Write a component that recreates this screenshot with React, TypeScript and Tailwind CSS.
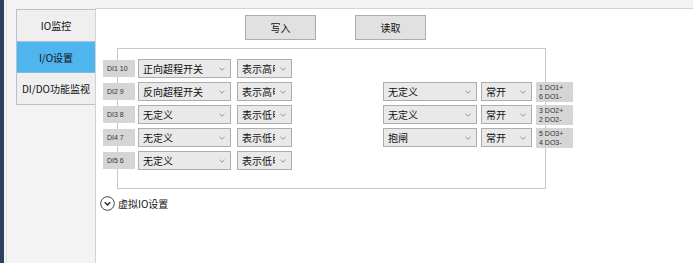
import React from "react";

const font = { fontFamily: '"Noto Sans CJK SC", "Noto Sans", sans-serif' };

function Chevron() {
  return (
    <svg width="6" height="4" viewBox="0 0 6 4" className="shrink-0">
      <path d="M0.5 0.8 L3 3.2 L5.5 0.8" fill="none" stroke="#8a8a8a" strokeWidth="0.9" />
    </svg>
  );
}

function Select({ w, text }: { w: string; text: string }) {
  return (
    <div
      className={`${w} h-[19px] shrink-0 flex items-center border border-[#adadad] bg-[#e9e9e9] pl-[4px] pr-[5px] overflow-hidden`}
    >
      <div className="flex-1 min-w-0 overflow-hidden mr-[5px]">
        <span className="block text-[10px] leading-[17px] text-[#111] whitespace-nowrap">{text}</span>
      </div>
      <Chevron />
    </div>
  );
}

function DiLabel({ t }: { t: string }) {
  return (
    <div className="w-[32px] h-[17px] shrink-0 bg-[#d5d5d5] flex items-center pl-[4px] text-[7px] leading-none text-[#333]" style={{ fontFamily: '"Liberation Sans", sans-serif' }}>
      {t}
    </div>
  );
}

function DoLabel({ a, b }: { a: string; b: string }) {
  return (
    <div className="w-[37px] h-[20px] shrink-0 bg-[#d5d5d5] flex flex-col justify-center pl-[3px] text-[7px] leading-[9px] text-[#333]" style={{ fontFamily: '"Liberation Sans", sans-serif' }}>
      <span>{a}</span>
      <span>{b}</span>
    </div>
  );
}

const rows = [
  { di: "DI1 10", s1: "正向超程开关", s2: "表示高电平" },
  { di: "DI2 9", s1: "反向超程开关", s2: "表示高电平", r: { s: "无定义", a: "1 DO1+", b: "6 DO1-" } },
  { di: "DI3 8", s1: "无定义", s2: "表示低电平", r: { s: "无定义", a: "3 DO2+", b: "2 DO2-" } },
  { di: "DI4 7", s1: "无定义", s2: "表示低电平", r: { s: "抱闸", a: "5 DO3+", b: "4 DO3-" } },
  { di: "DI5 6", s1: "无定义", s2: "表示低电平" },
];

export default function App() {
  return (
    <div className="w-[693px] h-[263px] flex bg-[#f3f3f3] overflow-hidden" style={font}>
      <div className="w-[4px] h-full bg-[#2e3f5f] shrink-0" />
      <div className="w-[91px] shrink-0 h-full flex">
        <div className="w-[2px] h-full" />
        <div className="w-[1px] h-full bg-[#e2e2e2]" />
        <div className="pl-[9px] pt-[9px]">
          <div className="w-[79px] flex flex-col border-l border-t border-[#b4c2d0]">
            <div className="h-[32px] flex items-center justify-center bg-[#efefef] border-b border-[#b4c2d0] text-[10px] text-[#111]">
              IO监控
            </div>
            <div className="h-[31px] flex items-center justify-center bg-[#4fb5ef] border-b border-[#8fb4d0] text-[10px] text-[#111]">
              I/O设置
            </div>
            <div className="h-[32px] flex items-center justify-center bg-[#efefef] border-b border-[#b4c2d0] text-[10px] text-[#111] whitespace-nowrap">
              DI/DO功能监视
            </div>
          </div>
        </div>
      </div>
      <div className="flex-1 mt-[8px] bg-white border-l border-t border-[#d2d2d2] flex flex-col">
        <div className="flex pl-[149px] pt-[6px] gap-[39px]">
          <div className="w-[71px] h-[25px] bg-[#e1e1e1] border border-[#adadad] flex items-center justify-center text-[10px] text-[#111]">
            写入
          </div>
          <div className="w-[71px] h-[25px] bg-[#e1e1e1] border border-[#adadad] flex items-center justify-center text-[10px] text-[#111]">
            读取
          </div>
        </div>
        <div className="ml-[21px] mt-[8px] w-[429px] h-[141px] border border-[#c8c8c8]">
          <div className="-ml-[15px] pt-[10px] flex flex-col gap-[4px]">
            {rows.map((r) => (
              <div key={r.di} className="flex items-center h-[19px]">
                <DiLabel t={r.di} />
                <div className="w-[3px] shrink-0" />
                <Select w="w-[93px]" text={r.s1} />
                <div className="w-[6px] shrink-0" />
                <Select w="w-[55px]" text={r.s2} />
                {r.r && (
                  <>
                    <div className="w-[91px] shrink-0" />
                    <Select w="w-[94px]" text={r.r.s} />
                    <div className="w-[4px] shrink-0" />
                    <Select w="w-[51px]" text="常开" />
                    <div className="w-[4px] shrink-0" />
                    <DoLabel a={r.r.a} b={r.r.b} />
                  </>
                )}
              </div>
            ))}
          </div>
        </div>
        <div className="flex items-center pl-[4px] mt-[7px] gap-[3px]">
          <svg width="15" height="15" viewBox="0 0 15 15">
            <circle cx="7.5" cy="7.5" r="6.8" fill="none" stroke="#444" strokeWidth="1" />
            <path d="M4.8 6.3 L7.5 9 L10.2 6.3" fill="none" stroke="#222" strokeWidth="1.4" />
          </svg>
          <span className="text-[10px] text-[#111]">虚拟IO设置</span>
        </div>
      </div>
    </div>
  );
}
